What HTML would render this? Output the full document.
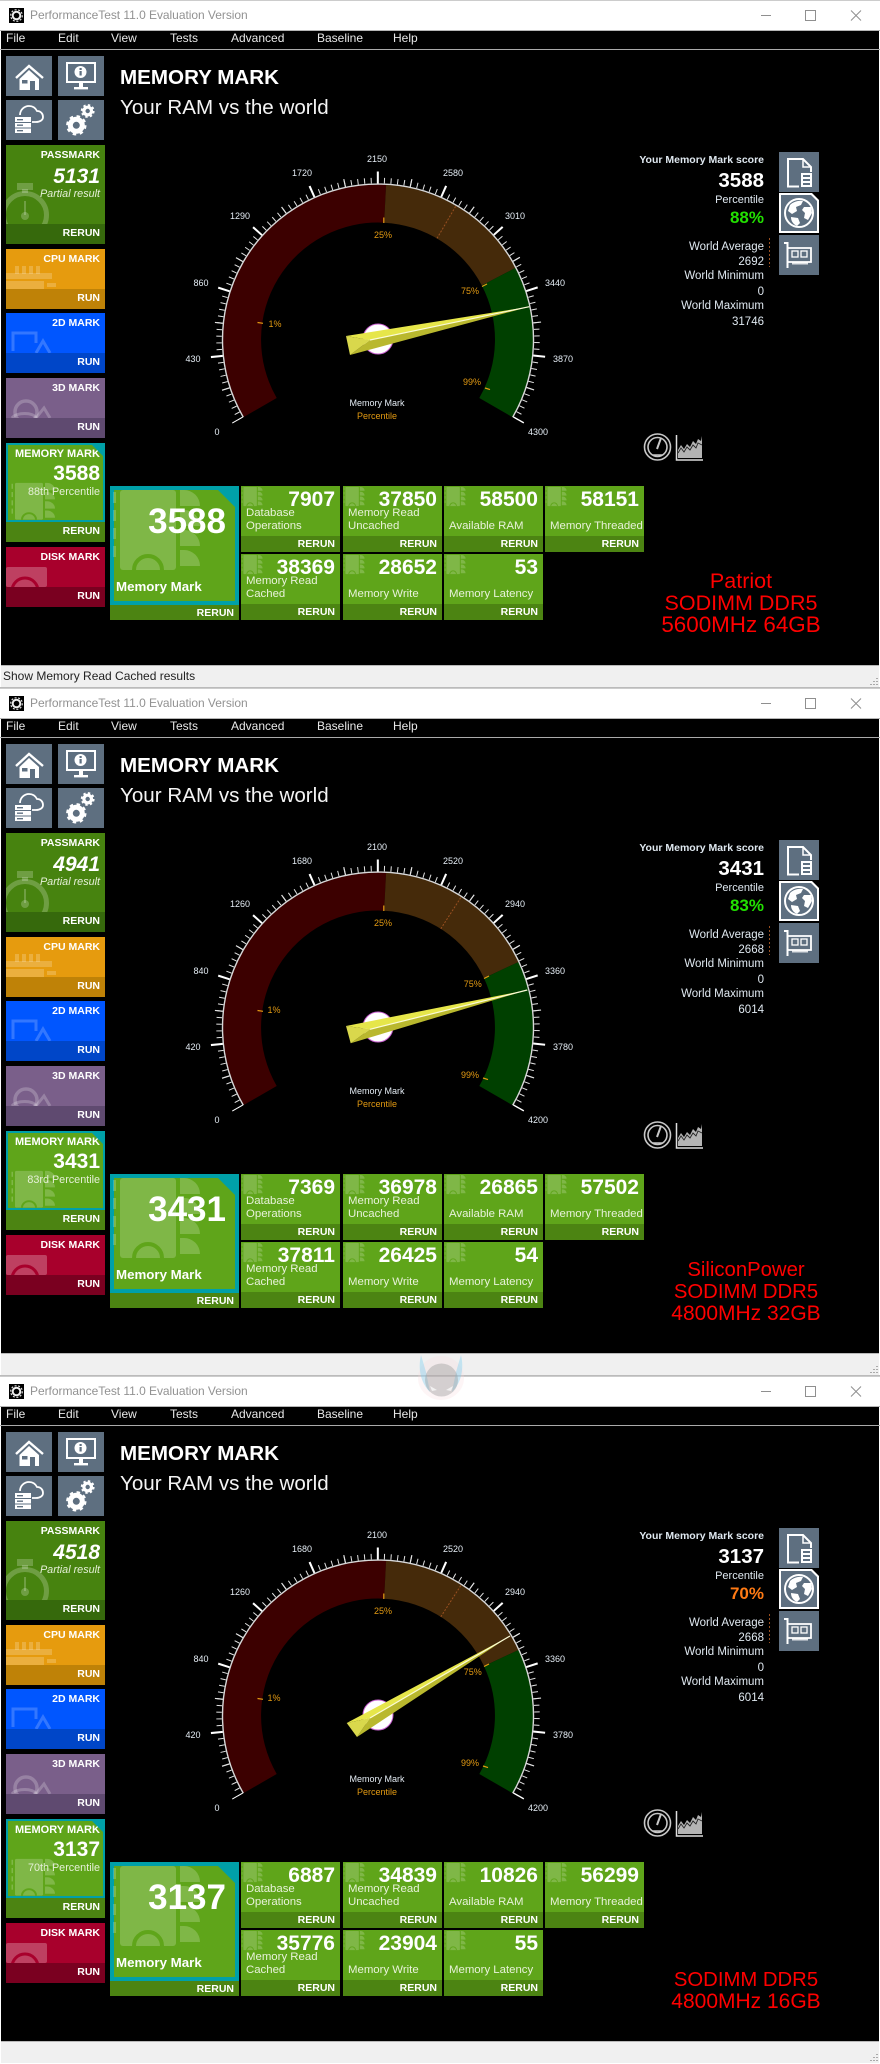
<!DOCTYPE html>
<html><head><meta charset="utf-8"><title>PerformanceTest</title>
<style>
html,body{margin:0;padding:0;width:880px;height:2064px;background:#fff;overflow:hidden;font-family:"Liberation Sans",Arial,sans-serif}
.w{position:absolute;left:0;width:880px;height:688px;overflow:hidden;background:#fff}
.w div,.w b,.w span,.w i{position:absolute;white-space:nowrap}
.top{left:0;top:0;width:880px;height:1px;background:#ccc}
.tt{left:30px;top:8px;font-size:12px;line-height:15px;color:#929292;letter-spacing:-.04px}
.bar{left:0;top:30px;width:880px;height:1px;background:#b5b5b5}
.menu{left:1px;top:31px;width:878px;height:18px;background:#000}
.menu span{top:0;font-size:12px;line-height:15px;color:#e8e8e8}
.line{left:0;top:49px;width:880px;height:1px;background:#aaa}
.blk{left:1px;top:50px;width:878px;height:615px;background:#000}
.st{left:1px;top:665px;width:878px;height:22px;background:#f0f0f0;border-top:1px solid #b8b8b8;box-sizing:border-box}
.stt{left:3px;top:668px;font-size:12px;line-height:16px;color:#222}
.btm{left:0;top:687px;width:880px;height:1px;background:#bbb}
.ib{width:46px;height:40px;background:#5e6f80}
.rb{left:779px;width:40px;height:40px;background:#5e6f80}
.s{left:6px;width:99px;overflow:hidden;color:#fff}
.s .f{left:0;right:0;bottom:0;height:20px}
.s .h{right:5px;top:3px;font-size:10.5px;line-height:14px;font-weight:bold}
.s .r{right:5px;bottom:0;font-size:10.5px;line-height:21px;font-weight:bold}
.s .v{right:5px;font-size:21px;line-height:24px;font-weight:bold}
.s .n{right:5px;font-size:10.8px;line-height:14px;color:#e6f0d8}
.tl{width:99px;height:66px;background:#5fa51a;color:#fff;overflow:hidden}
.tl .f{left:0;right:0;top:50px;height:16px;background:#4c8412}
.tl .v{right:5px;top:2px;font-size:21px;line-height:24px;font-weight:bold}
.tl .l{left:5px;bottom:19px;font-size:11.4px;line-height:13px;color:#e8f2da}
.tl .r{right:5px;top:50px;font-size:10.5px;line-height:17px;font-weight:bold}
.big{left:110px;top:486px;width:129px;height:134px;background:#4c8412;color:#fff;overflow:hidden}
.big .in{left:0;top:0;width:129px;height:119px;background:#00a0a8}
.big .g{left:4px;top:4px;width:121px;height:111px;background:#5fa51a}
.big .v{right:13px;top:16px;font-size:35px;line-height:40px;font-weight:bold}
.big .l{left:6px;top:93px;font-size:13.3px;line-height:16px;font-weight:bold}
.big .r{right:5px;top:119px;font-size:10.5px;line-height:16px;font-weight:bold}
.p{right:116px;text-align:right;font-size:11.5px;line-height:14px;color:#dfe8f0}
.red{left:641px;width:200px;bottom:52px;text-align:center;color:#f00;line-height:22px;font-size:21.5px;white-space:normal!important}
.red2{left:646px;bottom:51px;font-size:20.3px}
.red span{position:static!important}
svg{position:absolute;overflow:visible}
svg text{font-family:"Liberation Sans",Arial,sans-serif}
.gl{font-size:9px;fill:#e4ecf4;text-anchor:middle}
.gp{font-size:9px;fill:#e39a12;text-anchor:middle}
</style></head>
<body>
<svg width="0" height="0" style="left:0;top:0">
<defs>
<g id="ticks" fill="none" stroke="#e2e2e2">
<path d="M240.3 419A159 159 0 1 1 515.7 419" pathLength="100" stroke-width="5.5" stroke-dasharray=".15 .85" stroke-dashoffset=".075"/>
<path d="M239.4 419.5A160 160 0 1 1 516.6 419.5" pathLength="100" stroke-width="8" stroke-dasharray=".18 9.82" stroke-dashoffset="5.09"/>
<path d="M237.7 420.5A162 162 0 1 1 518.3 420.5" pathLength="100" stroke="#fff" stroke-width="12" stroke-dasharray=".3 9.7" stroke-dashoffset=".15"/>
<path d="M243.3 417.25A155.5 155.5 0 1 1 512.7 417.25" stroke="#d8d8d8" stroke-width="1.4"/>
</g>
<g id="chip" fill="#fff" fill-opacity=".2">
<rect x="10" y="4" width="56" height="80" rx="3"/>
<path d="M70 4h4a16 16 0 0 1 16 16H70zM70 24h4a16 16 0 0 1 16 16H70zM70 44h4a16 16 0 0 1 16 16H70zM70 64h4a16 16 0 0 1 16 16H70z"/>
<rect x="3" y="6" width="3" height="11"/><rect x="3" y="24" width="3" height="11"/><rect x="3" y="42" width="3" height="11"/><rect x="3" y="60" width="3" height="11"/>
<path d="M24 84A14 14 0 0 1 52 84" fill="none" stroke="#5fa51a" stroke-opacity="1" stroke-width="4"/>
</g>
<g id="home"><path d="M10 22L23 10l14 12" fill="none" stroke="#fff" stroke-width="2.4"/><path d="M13.5 23L23 14l10 9v11H13.5z" fill="#fff"/><rect x="16" y="24" width="5.5" height="3.5" fill="#5e6f80"/><rect x="24" y="25" width="5" height="9" fill="#5e6f80"/></g>
<g id="mon"><rect x="9" y="7" width="28" height="19" fill="none" stroke="#fff" stroke-width="2"/><circle cx="22.5" cy="16" r="6" fill="#fff"/><rect x="21.5" y="15" width="2.2" height="4.5" fill="#5e6f80"/><rect x="21.5" y="12" width="2.2" height="2" fill="#5e6f80"/><rect x="21" y="27" width="4" height="4" fill="#fff"/><rect x="16" y="31" width="14" height="2.4" fill="#fff"/></g>
<g id="cloud"><path d="M14 15C14 10 18 6 23 6C28 6 30 9 31 11C35 11 37 14 37 17C37 20 34 22 30 22H26" fill="none" stroke="#fff" stroke-width="1.8"/><path d="M9 17H25V33H9z" fill="#fff"/><path d="M9 22h16v1H9zM9 27.5h16v1H9z" fill="#5e6f80"/><path d="M11 19h6v1.4h-6zM11 24.5h6v1.4h-6zM11 30h6v1.4h-6z" fill="#5e6f80"/></g>
<g id="gear" fill="none" stroke="#fff"><circle cx="18.3" cy="25.3" r="6" stroke-width="5"/><circle cx="18.3" cy="25.3" r="9" stroke-width="2.4" stroke-dasharray="3.5 3.57"/><circle cx="29.7" cy="11" r="3.8" stroke-width="3.2"/><circle cx="29.7" cy="11" r="6" stroke-width="1.8" stroke-dasharray="2.4 2.31"/></g>
<g id="doc"><path d="M20 34.5H9V7H24L32 15V20" fill="none" stroke="#fff" stroke-width="2"/><path d="M24 7V15H32" fill="none" stroke="#fff" stroke-width="1.5"/><rect x="22" y="21" width="11" height="14" fill="#fff"/><path d="M24 23h7v2h-7zM24 27h7v2h-7zM24 31h7v2h-7z" fill="#5e6f80"/></g>
<g id="globe"><path d="M0 0H33L40 7V40H0z" fill="#fff"/><path d="M2 2H32L38 8V38H2z" fill="#5e6f80"/><circle cx="20" cy="20" r="14" fill="none" stroke="#fff" stroke-width="2"/><path d="M11 12C14 9 19 7 24 8L22 12L17 14L18 18L13 21L9 18ZM25 14L32 14L33 20L29 27L25 25L26 20L23 17ZM12 24L19 25L21 30L18 33C14 31 12 28 12 24Z" fill="#fff"/></g>
<g id="card"><path d="M5 8h3.5V33" fill="none" stroke="#fff" stroke-width="2"/><path d="M8 13H32V27H8" fill="none" stroke="#fff" stroke-width="1.8"/><rect x="13" y="16" width="6" height="6" fill="none" stroke="#fff" stroke-width="1.3"/><rect x="22" y="16" width="6" height="6" fill="none" stroke="#fff" stroke-width="1.3"/><rect x="13" y="27" width="16" height="2.5" fill="#fff" opacity=".8"/></g>
<g id="stop" fill="#fff" fill-opacity=".22"><rect x="11" y="38" width="16" height="7"/><rect x="16" y="44" width="6" height="4"/><circle cx="19" cy="70" r="21.5" fill="none" stroke="#fff" stroke-opacity=".22" stroke-width="5"/><rect x="18" y="56" width="2" height="14"/><circle cx="19" cy="71" r="4"/></g>
<g id="sw"><circle cx="657.5" cy="447" r="13" fill="none" stroke="#c8c8c8" stroke-width="1.6"/><circle cx="657.5" cy="447" r="9.5" fill="none" stroke="#c8c8c8" stroke-width="1.6"/><path d="M657 449L661 438" stroke="#c8c8c8" stroke-width="2"/><path d="M653 455h9" stroke="#c8c8c8" stroke-width="1.5"/><path d="M676.5 435V460H703" fill="none" stroke="#ddd" stroke-width="1.5"/><path d="M678 450L681 445L684 449L687 444L690 447L693 441L696 444L698 439L701 441L702 436V458H678z" fill="#b4b4b4"/><path d="M678 453L681 448L684 452L687 447L690 450L693 445L696 448L698 443L702 445" fill="none" stroke="#222" stroke-width=".9"/></g>
<g id="ti"><rect x="9" y="8" width="15" height="15" fill="#000"/><circle cx="16.5" cy="15.5" r="3.8" fill="none" stroke="#eee" stroke-width="2"/><circle cx="16.5" cy="15.5" r="5.8" fill="none" stroke="#ddd" stroke-width="1.2" stroke-dasharray="2 1.6"/></g>
<g id="ctl" fill="none" stroke="#8f8f8f"><path d="M761 15.5h10"/><rect x="805.5" y="10.5" width="10" height="10"/><path d="M851 10.5l10 10M861 10.5l-10 10"/></g>
<g id="cpu" fill="#fff" fill-opacity=".2"><rect x="9" y="17" width="4" height="8"/><rect x="16" y="17" width="4" height="8"/><rect x="23" y="17" width="4" height="8"/><rect x="30" y="17" width="4" height="8"/><rect x="0" y="24" width="46" height="6"/><rect x="0" y="32" width="11" height="8"/><rect x="11" y="32" width="27" height="8"/><rect x="41" y="34" width="9" height="4"/></g>
<g id="d2" fill="none" stroke="#fff" stroke-opacity=".2"><path d="M7 38V20H30V30" stroke-width="3"/><path d="M30 40L37 28L44 40" stroke-width="3"/></g>
<g id="d3" fill="none" stroke="#fff" stroke-opacity=".22"><circle cx="20" cy="34" r="11" stroke-width="3.5"/><path d="M6 40C10 34 28 34 30 40" stroke-width="3"/><path d="M30 40L38 30L44 40" stroke-width="3"/></g>
<g id="dk"><rect x="0" y="20" width="41" height="20" fill="#fff" fill-opacity=".25" rx="2"/><circle cx="19" cy="44" r="13" fill="none" stroke="#a8002c" stroke-width="3"/></g>
</defs>
</svg>

<!-- WINDOW 1 -->
<div class="w" style="top:0">
<div class="top"></div><svg width="880" height="688"><use href="#ti"/><use href="#ctl"/></svg>
<div class="tt">PerformanceTest 11.0 Evaluation Version</div><div class="bar"></div>
<div class="menu"><span style="left:5px">File</span><span style="left:57px">Edit</span><span style="left:110px">View</span><span style="left:169px">Tests</span><span style="left:230px">Advanced</span><span style="left:316px">Baseline</span><span style="left:392px">Help</span></div>
<div class="line"></div><div class="blk"></div>
<div class="ib" style="left:6px;top:56px"><svg width="46" height="40"><use href="#home"/></svg></div>
<div class="ib" style="left:58px;top:56px"><svg width="46" height="40"><use href="#mon"/></svg></div>
<div class="ib" style="left:6px;top:100px"><svg width="46" height="40"><use href="#cloud"/></svg></div>
<div class="ib" style="left:58px;top:100px"><svg width="46" height="40"><use href="#gear"/></svg></div>
<div class="s" style="top:145px;height:99px;background:#47830f"><svg width="99" height="99"><use href="#stop"/></svg><div class="f" style="background:#36690c"></div><b class="h">PASSMARK</b><i class="v" style="top:20px;font-weight:bold">5131</i><i class="n" style="top:42px">Partial result</i><b class="r">RERUN</b></div>
<div class="s" style="top:249px;height:60px;background:#e69b0e"><svg width="99" height="60"><use href="#cpu"/></svg><div class="f" style="background:#bf8207"></div><b class="h">CPU MARK</b><b class="r">RUN</b></div>
<div class="s" style="top:313px;height:60px;background:#0056ff"><svg width="99" height="60"><use href="#d2"/></svg><div class="f" style="background:#0046c8"></div><b class="h">2D MARK</b><b class="r">RUN</b></div>
<div class="s" style="top:378px;height:60px;background:#7a5f8a"><svg width="99" height="60"><use href="#d3"/></svg><div class="f" style="background:#5f4a70"></div><b class="h">3D MARK</b><b class="r">RUN</b></div>
<div class="s" style="top:443px;height:99px;background:#00a0a8"><div style="left:2px;top:2px;width:95px;height:75px;background:#5fa51a"></div><svg width="99" height="99"><use href="#chip" transform="translate(4 38) scale(.5 .46)"/></svg><div class="f" style="background:#4c8412"></div><b class="h" style="left:9px;right:auto;top:4px;font-size:11px">MEMORY MARK</b><svg width="99" height="99"><path d="M86 2H99V15z" fill="#00a0a8"/></svg><b class="v" style="top:19px">3588</b><span class="n" style="top:42px">88th Percentile</span><b class="r">RERUN</b></div>
<div class="s" style="top:547px;height:60px;background:#a8002c"><svg width="99" height="60"><use href="#dk"/></svg><div class="f" style="background:#7a0020"></div><b class="h">DISK MARK</b><b class="r">RUN</b></div>

<div style="left:120px;top:66px;font-size:20.6px;line-height:24px;font-weight:bold;color:#fff">MEMORY MARK</div>
<div style="left:120px;top:96px;font-size:20.6px;line-height:24px;color:#f4f4f4">Your RAM vs the world</div>

<svg width="880" height="688">
<path d="M243.8 417A155 155 0 0 1 386.1 184.7L384.1 222.7A117 117 0 0 0 276.7 398Z" fill="#3c0000"/>
<path d="M386.1 184.7A155 155 0 0 1 515.5 267.9L481.8 285.5A117 117 0 0 0 384.1 222.7Z" fill="#452a0a"/>
<path d="M515.5 267.9A155 155 0 0 1 512.2 417L479.3 398A117 117 0 0 0 481.8 285.5Z" fill="#004000"/>
<path d="M437 238.4L456.1 205.6" stroke="#9a5020" stroke-width="1" stroke-dasharray="2 1.5"/>
<use href="#ticks"/>
<g stroke="#e39a12" stroke-width="1.2"><path d="M257.5 322.5l5.5 .8M383.8 217.5v5.5M482 286.5l5-2.5M485 388l5 1.6"/></g>
<text class="gl" x="217" y="435">0</text><text class="gl" x="193" y="362">430</text><text class="gl" x="201" y="286">860</text><text class="gl" x="240" y="219">1290</text><text class="gl" x="302" y="176">1720</text><text class="gl" x="377" y="162">2150</text><text class="gl" x="453" y="176">2580</text><text class="gl" x="515" y="219">3010</text><text class="gl" x="555" y="286">3440</text><text class="gl" x="563" y="362">3870</text><text class="gl" x="538" y="435">4300</text>
<text class="gp" x="275" y="327">1%</text><text class="gp" x="383" y="238">25%</text><text class="gp" x="470" y="294">75%</text><text class="gp" x="472" y="385">99%</text>
<text class="gl" x="377" y="406">Memory Mark</text><text class="gp" x="377" y="419">Percentile</text>
<circle cx="378" cy="339" r="15" fill="#fff" stroke="#c860d0" stroke-width="1"/>
<polygon points="346,336 529.3,306.7 370,340" fill="#e6e64a"/><polygon points="350,355 529.3,306.7 370,340" fill="#b9b82e"/><polygon points="346,336 370,340 350,355" fill="#d9d84c"/><path d="M370 340L529.3 306.7" stroke="#fbfbd8" stroke-width="1.2"/>
<use href="#sw"/>
</svg>

<b class="p" style="top:153px;font-size:10.5px">Your Memory Mark score</b>
<b class="p" style="top:169px;font-size:20.5px;line-height:24px;color:#fff">3588</b>
<span class="p" style="top:193px;font-size:11px">Percentile</span>
<b class="p" style="top:208px;font-size:17px;line-height:20px;color:#22e000">88%</b>
<span class="p" style="top:240px">World Average</span><span class="p" style="top:255px">2692</span><span class="p" style="top:269px">World Minimum</span><span class="p" style="top:285px">0</span><span class="p" style="top:299px">World Maximum</span><span class="p" style="top:315px">31746</span>
<svg width="880" height="688"><path d="M769.5 238V267" stroke="#9a5020" stroke-width="1" stroke-dasharray="2 2"/></svg>
<div class="rb" style="top:152px"><svg width="40" height="40"><use href="#doc"/></svg></div>
<div class="rb" style="top:193px;background:none"><svg width="40" height="40"><use href="#globe"/></svg></div>
<div class="rb" style="top:235px"><svg width="40" height="40"><use href="#card"/></svg></div>

<div class="big"><div class="in"></div><div class="g"></div><svg width="129" height="134"><use href="#chip"/><path d="M108 4H125V21z" fill="#00a0a8"/></svg><b class="v">3588</b><b class="l">Memory Mark</b><b class="r">RERUN</b></div>
<div class="tl" style="left:241px;top:486px"><div class="f"></div><svg width="99" height="66"><use href="#chip" transform="scale(.24)"/></svg><b class="v">7907</b><span class="l">Database<br>Operations</span><b class="r">RERUN</b></div>
<div class="tl" style="left:343px;top:486px"><div class="f"></div><svg width="99" height="66"><use href="#chip" transform="scale(.24)"/></svg><b class="v">37850</b><span class="l">Memory Read<br>Uncached</span><b class="r">RERUN</b></div>
<div class="tl" style="left:444px;top:486px"><div class="f"></div><svg width="99" height="66"><use href="#chip" transform="scale(.24)"/></svg><b class="v">58500</b><span class="l">Available RAM</span><b class="r">RERUN</b></div>
<div class="tl" style="left:545px;top:486px"><div class="f"></div><svg width="99" height="66"><use href="#chip" transform="scale(.24)"/></svg><b class="v">58151</b><span class="l">Memory Threaded</span><b class="r">RERUN</b></div>
<div class="tl" style="left:241px;top:554px"><div class="f"></div><svg width="99" height="66"><use href="#chip" transform="scale(.24)"/></svg><b class="v">38369</b><span class="l">Memory Read<br>Cached</span><b class="r">RERUN</b></div>
<div class="tl" style="left:343px;top:554px"><div class="f"></div><svg width="99" height="66"><use href="#chip" transform="scale(.24)"/></svg><b class="v">28652</b><span class="l">Memory Write</span><b class="r">RERUN</b></div>
<div class="tl" style="left:444px;top:554px"><div class="f"></div><svg width="99" height="66"><use href="#chip" transform="scale(.24)"/></svg><b class="v">53</b><span class="l">Memory Latency</span><b class="r">RERUN</b></div>

<div class="red">Patriot<br>SODIMM DDR5<br><span style="font-size:22.4px">5600MHz 64GB</span></div>
<div class="st"></div><div class="stt">Show Memory Read Cached results</div><div class="btm"></div>
<svg width="880" height="688"><path d="M877 678v1M874 681v1M877 681v1M871 684v1M874 684v1M877 684v1" stroke="#aaa" stroke-width="2"/></svg>
</div>

<!-- WINDOW 2 -->
<div class="w" style="top:688px">
<div class="top"></div><svg width="880" height="688"><use href="#ti"/><use href="#ctl"/></svg>
<div class="tt">PerformanceTest 11.0 Evaluation Version</div><div class="bar"></div>
<div class="menu"><span style="left:5px">File</span><span style="left:57px">Edit</span><span style="left:110px">View</span><span style="left:169px">Tests</span><span style="left:230px">Advanced</span><span style="left:316px">Baseline</span><span style="left:392px">Help</span></div>
<div class="line"></div><div class="blk"></div>
<div class="ib" style="left:6px;top:56px"><svg width="46" height="40"><use href="#home"/></svg></div>
<div class="ib" style="left:58px;top:56px"><svg width="46" height="40"><use href="#mon"/></svg></div>
<div class="ib" style="left:6px;top:100px"><svg width="46" height="40"><use href="#cloud"/></svg></div>
<div class="ib" style="left:58px;top:100px"><svg width="46" height="40"><use href="#gear"/></svg></div>
<div class="s" style="top:145px;height:99px;background:#47830f"><svg width="99" height="99"><use href="#stop"/></svg><div class="f" style="background:#36690c"></div><b class="h">PASSMARK</b><i class="v" style="top:20px;font-weight:bold">4941</i><i class="n" style="top:42px">Partial result</i><b class="r">RERUN</b></div>
<div class="s" style="top:249px;height:60px;background:#e69b0e"><svg width="99" height="60"><use href="#cpu"/></svg><div class="f" style="background:#bf8207"></div><b class="h">CPU MARK</b><b class="r">RUN</b></div>
<div class="s" style="top:313px;height:60px;background:#0056ff"><svg width="99" height="60"><use href="#d2"/></svg><div class="f" style="background:#0046c8"></div><b class="h">2D MARK</b><b class="r">RUN</b></div>
<div class="s" style="top:378px;height:60px;background:#7a5f8a"><svg width="99" height="60"><use href="#d3"/></svg><div class="f" style="background:#5f4a70"></div><b class="h">3D MARK</b><b class="r">RUN</b></div>
<div class="s" style="top:443px;height:99px;background:#00a0a8"><div style="left:2px;top:2px;width:95px;height:75px;background:#5fa51a"></div><svg width="99" height="99"><use href="#chip" transform="translate(4 38) scale(.5 .46)"/></svg><div class="f" style="background:#4c8412"></div><b class="h" style="left:9px;right:auto;top:4px;font-size:11px">MEMORY MARK</b><svg width="99" height="99"><path d="M86 2H99V15z" fill="#00a0a8"/></svg><b class="v" style="top:19px">3431</b><span class="n" style="top:42px">83rd Percentile</span><b class="r">RERUN</b></div>
<div class="s" style="top:547px;height:60px;background:#a8002c"><svg width="99" height="60"><use href="#dk"/></svg><div class="f" style="background:#7a0020"></div><b class="h">DISK MARK</b><b class="r">RUN</b></div>

<div style="left:120px;top:66px;font-size:20.6px;line-height:24px;font-weight:bold;color:#fff">MEMORY MARK</div>
<div style="left:120px;top:96px;font-size:20.6px;line-height:24px;color:#f4f4f4">Your RAM vs the world</div>

<svg width="880" height="688">
<path d="M243.8 417A155 155 0 0 1 386.1 184.7L384.1 222.7A117 117 0 0 0 276.7 398Z" fill="#3c0000"/>
<path d="M386.1 184.7A155 155 0 0 1 518.5 274L484 290.1A117 117 0 0 0 384.1 222.7Z" fill="#452a0a"/>
<path d="M518.5 274A155 155 0 0 1 512.2 417L479.3 398A117 117 0 0 0 484 290.1Z" fill="#004000"/>
<path d="M440.8 240.8L461.3 208.8" stroke="#9a5020" stroke-width="1" stroke-dasharray="2 1.5"/>
<use href="#ticks"/>
<g stroke="#e39a12" stroke-width="1.2"><path d="M257.5 322.5l5.5 .8M383.8 217.5v5.5M484 290.5l5-2.5M483 390l5 1.6"/></g>
<text class="gl" x="217" y="435">0</text><text class="gl" x="193" y="362">420</text><text class="gl" x="201" y="286">840</text><text class="gl" x="240" y="219">1260</text><text class="gl" x="302" y="176">1680</text><text class="gl" x="377" y="162">2100</text><text class="gl" x="453" y="176">2520</text><text class="gl" x="515" y="219">2940</text><text class="gl" x="555" y="286">3360</text><text class="gl" x="563" y="362">3780</text><text class="gl" x="538" y="435">4200</text>
<text class="gp" x="274" y="325">1%</text><text class="gp" x="383" y="238">25%</text><text class="gp" x="472.7" y="299">75%</text><text class="gp" x="470" y="390">99%</text>
<text class="gl" x="377" y="406">Memory Mark</text><text class="gp" x="377" y="419">Percentile</text>
<circle cx="378" cy="339" r="15" fill="#fff" stroke="#c860d0" stroke-width="1"/>
<polygon points="346,338 527.3,302 370,341.3" fill="#e6e64a"/><polygon points="350.7,355.3 527.3,302 370,341.3" fill="#b9b82e"/><polygon points="346,338 370,341.3 350.7,355.3" fill="#d9d84c"/><path d="M370 341.3L527.3 302" stroke="#fbfbd8" stroke-width="1.2"/>
<use href="#sw"/>
</svg>

<b class="p" style="top:153px;font-size:10.5px">Your Memory Mark score</b>
<b class="p" style="top:169px;font-size:20.5px;line-height:24px;color:#fff">3431</b>
<span class="p" style="top:193px;font-size:11px">Percentile</span>
<b class="p" style="top:208px;font-size:17px;line-height:20px;color:#22e000">83%</b>
<span class="p" style="top:240px">World Average</span><span class="p" style="top:255px">2668</span><span class="p" style="top:269px">World Minimum</span><span class="p" style="top:285px">0</span><span class="p" style="top:299px">World Maximum</span><span class="p" style="top:315px">6014</span>
<svg width="880" height="688"><path d="M769.5 238V267" stroke="#9a5020" stroke-width="1" stroke-dasharray="2 2"/></svg>
<div class="rb" style="top:152px"><svg width="40" height="40"><use href="#doc"/></svg></div>
<div class="rb" style="top:193px;background:none"><svg width="40" height="40"><use href="#globe"/></svg></div>
<div class="rb" style="top:235px"><svg width="40" height="40"><use href="#card"/></svg></div>

<div class="big"><div class="in"></div><div class="g"></div><svg width="129" height="134"><use href="#chip"/><path d="M108 4H125V21z" fill="#00a0a8"/></svg><b class="v">3431</b><b class="l">Memory Mark</b><b class="r">RERUN</b></div>
<div class="tl" style="left:241px;top:486px"><div class="f"></div><svg width="99" height="66"><use href="#chip" transform="scale(.24)"/></svg><b class="v">7369</b><span class="l">Database<br>Operations</span><b class="r">RERUN</b></div>
<div class="tl" style="left:343px;top:486px"><div class="f"></div><svg width="99" height="66"><use href="#chip" transform="scale(.24)"/></svg><b class="v">36978</b><span class="l">Memory Read<br>Uncached</span><b class="r">RERUN</b></div>
<div class="tl" style="left:444px;top:486px"><div class="f"></div><svg width="99" height="66"><use href="#chip" transform="scale(.24)"/></svg><b class="v">26865</b><span class="l">Available RAM</span><b class="r">RERUN</b></div>
<div class="tl" style="left:545px;top:486px"><div class="f"></div><svg width="99" height="66"><use href="#chip" transform="scale(.24)"/></svg><b class="v">57502</b><span class="l">Memory Threaded</span><b class="r">RERUN</b></div>
<div class="tl" style="left:241px;top:554px"><div class="f"></div><svg width="99" height="66"><use href="#chip" transform="scale(.24)"/></svg><b class="v">37811</b><span class="l">Memory Read<br>Cached</span><b class="r">RERUN</b></div>
<div class="tl" style="left:343px;top:554px"><div class="f"></div><svg width="99" height="66"><use href="#chip" transform="scale(.24)"/></svg><b class="v">26425</b><span class="l">Memory Write</span><b class="r">RERUN</b></div>
<div class="tl" style="left:444px;top:554px"><div class="f"></div><svg width="99" height="66"><use href="#chip" transform="scale(.24)"/></svg><b class="v">54</b><span class="l">Memory Latency</span><b class="r">RERUN</b></div>

<div class="red red2">SiliconPower<br>SODIMM DDR5<br><span style="font-size:21px">4800MHz 32GB</span></div>
<div class="st"></div><div class="btm"></div>
<svg width="880" height="688"><path d="M877 678v1M874 681v1M877 681v1M871 684v1M874 684v1M877 684v1" stroke="#aaa" stroke-width="2"/></svg>
</div>

<!-- WINDOW 3 -->
<div class="w" style="top:1376px">
<div class="top"></div><svg width="880" height="688"><use href="#ti"/><use href="#ctl"/></svg>
<div class="tt">PerformanceTest 11.0 Evaluation Version</div><div class="bar"></div>
<div class="menu"><span style="left:5px">File</span><span style="left:57px">Edit</span><span style="left:110px">View</span><span style="left:169px">Tests</span><span style="left:230px">Advanced</span><span style="left:316px">Baseline</span><span style="left:392px">Help</span></div>
<div class="line"></div><div class="blk"></div>
<div class="ib" style="left:6px;top:56px"><svg width="46" height="40"><use href="#home"/></svg></div>
<div class="ib" style="left:58px;top:56px"><svg width="46" height="40"><use href="#mon"/></svg></div>
<div class="ib" style="left:6px;top:100px"><svg width="46" height="40"><use href="#cloud"/></svg></div>
<div class="ib" style="left:58px;top:100px"><svg width="46" height="40"><use href="#gear"/></svg></div>
<div class="s" style="top:145px;height:99px;background:#47830f"><svg width="99" height="99"><use href="#stop"/></svg><div class="f" style="background:#36690c"></div><b class="h">PASSMARK</b><i class="v" style="top:20px;font-weight:bold">4518</i><i class="n" style="top:42px">Partial result</i><b class="r">RERUN</b></div>
<div class="s" style="top:249px;height:60px;background:#e69b0e"><svg width="99" height="60"><use href="#cpu"/></svg><div class="f" style="background:#bf8207"></div><b class="h">CPU MARK</b><b class="r">RUN</b></div>
<div class="s" style="top:313px;height:60px;background:#0056ff"><svg width="99" height="60"><use href="#d2"/></svg><div class="f" style="background:#0046c8"></div><b class="h">2D MARK</b><b class="r">RUN</b></div>
<div class="s" style="top:378px;height:60px;background:#7a5f8a"><svg width="99" height="60"><use href="#d3"/></svg><div class="f" style="background:#5f4a70"></div><b class="h">3D MARK</b><b class="r">RUN</b></div>
<div class="s" style="top:443px;height:99px;background:#00a0a8"><div style="left:2px;top:2px;width:95px;height:75px;background:#5fa51a"></div><svg width="99" height="99"><use href="#chip" transform="translate(4 38) scale(.5 .46)"/></svg><div class="f" style="background:#4c8412"></div><b class="h" style="left:9px;right:auto;top:4px;font-size:11px">MEMORY MARK</b><svg width="99" height="99"><path d="M86 2H99V15z" fill="#00a0a8"/></svg><b class="v" style="top:19px">3137</b><span class="n" style="top:42px">70th Percentile</span><b class="r">RERUN</b></div>
<div class="s" style="top:547px;height:60px;background:#a8002c"><svg width="99" height="60"><use href="#dk"/></svg><div class="f" style="background:#7a0020"></div><b class="h">DISK MARK</b><b class="r">RUN</b></div>

<div style="left:120px;top:66px;font-size:20.6px;line-height:24px;font-weight:bold;color:#fff">MEMORY MARK</div>
<div style="left:120px;top:96px;font-size:20.6px;line-height:24px;color:#f4f4f4">Your RAM vs the world</div>

<svg width="880" height="688">
<path d="M243.8 417A155 155 0 0 1 386.1 184.7L384.1 222.7A117 117 0 0 0 276.7 398Z" fill="#3c0000"/>
<path d="M386.1 184.7A155 155 0 0 1 518.5 274L484 290.1A117 117 0 0 0 384.1 222.7Z" fill="#452a0a"/>
<path d="M518.5 274A155 155 0 0 1 512.2 417L479.3 398A117 117 0 0 0 484 290.1Z" fill="#004000"/>
<path d="M440.8 240.8L461.3 208.8" stroke="#9a5020" stroke-width="1" stroke-dasharray="2 1.5"/>
<use href="#ticks"/>
<g stroke="#e39a12" stroke-width="1.2"><path d="M257.5 322.5l5.5 .8M383.8 217.5v5.5M484 290.5l5-2.5M483 390l5 1.6"/></g>
<text class="gl" x="217" y="435">0</text><text class="gl" x="193" y="362">420</text><text class="gl" x="201" y="286">840</text><text class="gl" x="240" y="219">1260</text><text class="gl" x="302" y="176">1680</text><text class="gl" x="377" y="162">2100</text><text class="gl" x="453" y="176">2520</text><text class="gl" x="515" y="219">2940</text><text class="gl" x="555" y="286">3360</text><text class="gl" x="563" y="362">3780</text><text class="gl" x="538" y="435">4200</text>
<text class="gp" x="274" y="325">1%</text><text class="gp" x="383" y="238">25%</text><text class="gp" x="472.7" y="299">75%</text><text class="gp" x="470" y="390">99%</text>
<text class="gl" x="377" y="406">Memory Mark</text><text class="gp" x="377" y="419">Percentile</text>
<circle cx="378" cy="339" r="15" fill="#fff" stroke="#c860d0" stroke-width="1"/>
<polygon points="346.7,347 510,260 370,342" fill="#e6e64a"/><polygon points="357,361 510,260 370,342" fill="#b9b82e"/><polygon points="346.7,347 370,342 357,361" fill="#d9d84c"/><path d="M370 342L510 260" stroke="#fbfbd8" stroke-width="1.2"/>
<use href="#sw"/>
</svg>

<b class="p" style="top:153px;font-size:10.5px">Your Memory Mark score</b>
<b class="p" style="top:169px;font-size:20.5px;line-height:24px;color:#fff">3137</b>
<span class="p" style="top:193px;font-size:11px">Percentile</span>
<b class="p" style="top:208px;font-size:17px;line-height:20px;color:#ff7a14">70%</b>
<span class="p" style="top:240px">World Average</span><span class="p" style="top:255px">2668</span><span class="p" style="top:269px">World Minimum</span><span class="p" style="top:285px">0</span><span class="p" style="top:299px">World Maximum</span><span class="p" style="top:315px">6014</span>
<svg width="880" height="688"><path d="M769.5 238V267" stroke="#9a5020" stroke-width="1" stroke-dasharray="2 2"/></svg>
<div class="rb" style="top:152px"><svg width="40" height="40"><use href="#doc"/></svg></div>
<div class="rb" style="top:193px;background:none"><svg width="40" height="40"><use href="#globe"/></svg></div>
<div class="rb" style="top:235px"><svg width="40" height="40"><use href="#card"/></svg></div>

<div class="big"><div class="in"></div><div class="g"></div><svg width="129" height="134"><use href="#chip"/><path d="M108 4H125V21z" fill="#00a0a8"/></svg><b class="v">3137</b><b class="l">Memory Mark</b><b class="r">RERUN</b></div>
<div class="tl" style="left:241px;top:486px"><div class="f"></div><svg width="99" height="66"><use href="#chip" transform="scale(.24)"/></svg><b class="v">6887</b><span class="l">Database<br>Operations</span><b class="r">RERUN</b></div>
<div class="tl" style="left:343px;top:486px"><div class="f"></div><svg width="99" height="66"><use href="#chip" transform="scale(.24)"/></svg><b class="v">34839</b><span class="l">Memory Read<br>Uncached</span><b class="r">RERUN</b></div>
<div class="tl" style="left:444px;top:486px"><div class="f"></div><svg width="99" height="66"><use href="#chip" transform="scale(.24)"/></svg><b class="v">10826</b><span class="l">Available RAM</span><b class="r">RERUN</b></div>
<div class="tl" style="left:545px;top:486px"><div class="f"></div><svg width="99" height="66"><use href="#chip" transform="scale(.24)"/></svg><b class="v">56299</b><span class="l">Memory Threaded</span><b class="r">RERUN</b></div>
<div class="tl" style="left:241px;top:554px"><div class="f"></div><svg width="99" height="66"><use href="#chip" transform="scale(.24)"/></svg><b class="v">35776</b><span class="l">Memory Read<br>Cached</span><b class="r">RERUN</b></div>
<div class="tl" style="left:343px;top:554px"><div class="f"></div><svg width="99" height="66"><use href="#chip" transform="scale(.24)"/></svg><b class="v">23904</b><span class="l">Memory Write</span><b class="r">RERUN</b></div>
<div class="tl" style="left:444px;top:554px"><div class="f"></div><svg width="99" height="66"><use href="#chip" transform="scale(.24)"/></svg><b class="v">55</b><span class="l">Memory Latency</span><b class="r">RERUN</b></div>

<div class="red red2">SODIMM DDR5<br><span style="font-size:21px">4800MHz 16GB</span></div>
<div class="st"></div>
<svg width="880" height="688"><path d="M877 678v1M874 681v1M877 681v1M871 684v1M874 684v1M877 684v1" stroke="#aaa" stroke-width="2"/></svg>
</div>

<!-- watermark -->
<svg width="880" height="2064" style="left:0;top:0;pointer-events:none">
<ellipse cx="441" cy="1378" rx="23" ry="22" fill="#f8d8dc" opacity=".25"/>
<path d="M421 1355C418 1368 420 1382 430 1392L426 1372ZM461 1355C464 1368 462 1382 452 1392L456 1372Z" fill="#7cd0f0" opacity=".4"/>
<circle cx="441.5" cy="1380" r="16.5" fill="#9a9a9a" opacity=".42"/>
<path d="M430 1386l7 4-5 1zM453 1386l-7 4 5 1z" fill="#fff" opacity=".7"/>
</svg>
</body></html>
